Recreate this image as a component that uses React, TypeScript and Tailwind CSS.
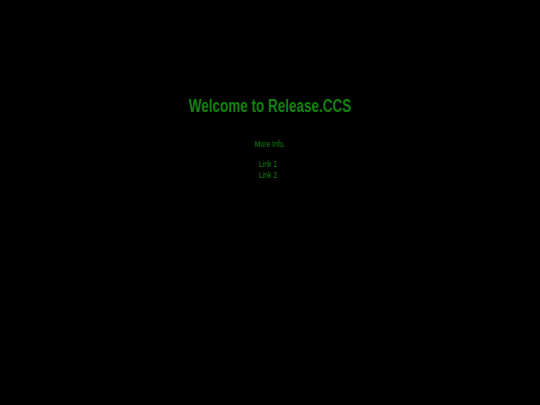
export default function App() {
  return (
    <div className="min-h-screen bg-black text-[#12800f] font-['Liberation_Sans',Arial,sans-serif]">
      <div className="flex flex-col items-center pt-[95px] text-center scale-x-[0.75] origin-top">
        <h1 className="text-[18px] font-bold leading-[22px]">Welcome to Release.CCS</h1>
        <p className="mt-[22px] text-[9px] leading-[11px]">More Info.</p>
        <div className="mt-[9px] flex flex-col pr-[5px] text-[9px] leading-[11px]">
          <a href="#">Link 1</a>
          <a href="#">Link 2</a>
        </div>
      </div>
    </div>
  );
}
